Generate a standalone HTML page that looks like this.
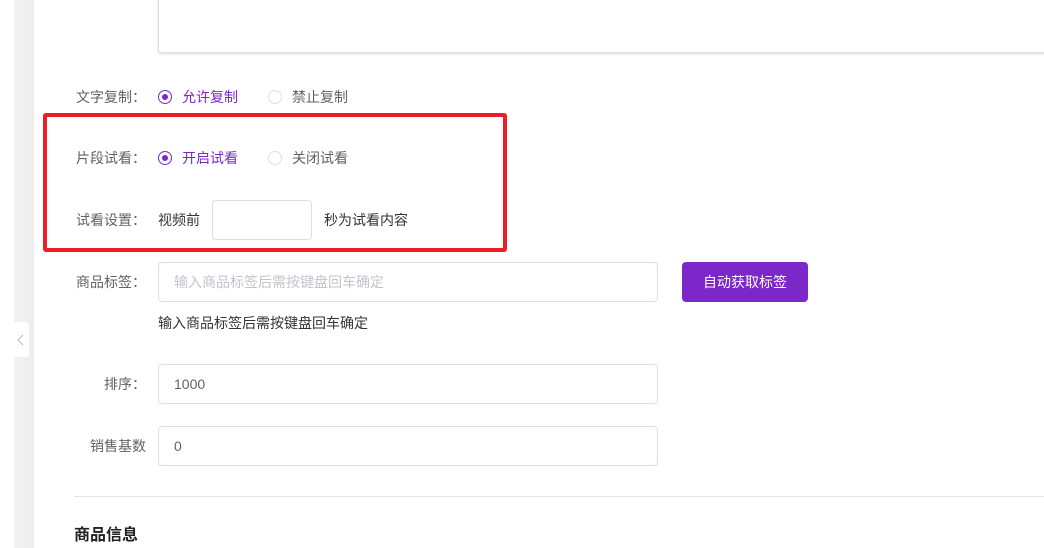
<!DOCTYPE html>
<html><head><meta charset="utf-8"><style>
*{box-sizing:border-box;margin:0;padding:0}
body{width:1044px;height:548px;overflow:hidden;background:#fff;font-family:"Liberation Sans","Noto Sans CJK SC",sans-serif;font-size:14px;color:#333;position:relative}
.strip{position:absolute;left:14px;top:0;width:20px;height:548px;background:linear-gradient(to right,#f2f2f2,#ececec)}
.tab{position:absolute;left:14px;top:322px;width:15px;height:35px;background:#fff;border-radius:0 3px 3px 0}
.tab svg{position:absolute;left:3px;top:12px}
.abs{position:absolute}
.ta{left:158px;top:-4px;width:900px;height:57px;border:1px solid #dcdfe6;border-radius:3px;box-shadow:0 1px 2px rgba(0,0,0,.15)}
.lbl{color:#606266;font-size:14px;line-height:16px}
.radio{width:14px;height:14px;border-radius:50%;border:1px solid #dcdfe6;background:#fff}
.radio.on{border-color:#7b27c9}
.radio.on::after{content:"";position:absolute;left:3px;top:3px;width:6px;height:6px;border-radius:50%;background:#7b27c9}
.inp{border:1px solid #dcdfe6;border-radius:4px;background:#fff;padding-left:15px;font-size:14px;color:#606266;display:flex;align-items:center}
.red{left:43px;top:113px;width:464px;height:139px;border:4px solid #ee1c25;border-radius:3px}
.btn{left:682px;top:262px;width:126px;height:40px;background:#7b27c9;border-radius:4px;color:#fff;font-size:14px;display:flex;align-items:center;justify-content:center}
</style></head><body>
<div class="strip"></div>
<div class="tab"><svg width="8" height="12" viewBox="0 0 8 12"><path d="M6 1L1 6l5 5" fill="none" stroke="#bbb" stroke-width="1"/></svg></div>
<div class="abs ta"></div>

<div class="abs lbl" style="left:76px;top:89px">文字复制：</div>
<div class="abs radio on" style="left:158px;top:90px"></div>
<div class="abs lbl" style="left:182px;top:89px;color:#7b27c9">允许复制</div>
<div class="abs radio" style="left:268px;top:90px"></div>
<div class="abs lbl" style="left:292px;top:89px">禁止复制</div>

<div class="abs red"></div>
<div class="abs lbl" style="left:76px;top:150px">片段试看：</div>
<div class="abs radio on" style="left:158px;top:151px"></div>
<div class="abs lbl" style="left:182px;top:150px;color:#7b27c9">开启试看</div>
<div class="abs radio" style="left:268px;top:151px"></div>
<div class="abs lbl" style="left:292px;top:150px">关闭试看</div>

<div class="abs lbl" style="left:76px;top:212px">试看设置：</div>
<div class="abs lbl" style="left:158px;top:212px;color:#333">视频前</div>
<div class="abs inp" style="left:212px;top:200px;width:100px;height:40px"></div>
<div class="abs lbl" style="left:324px;top:212px;color:#333">秒为试看内容</div>

<div class="abs lbl" style="left:76px;top:274px">商品标签：</div>
<div class="abs inp" style="left:158px;top:262px;width:500px;height:40px;color:#c0c4cc">输入商品标签后需按键盘回车确定</div>
<div class="abs btn">自动获取标签</div>
<div class="abs lbl" style="left:158px;top:315px;color:#333">输入商品标签后需按键盘回车确定</div>

<div class="abs lbl" style="left:104px;top:376px">排序：</div>
<div class="abs inp" style="left:158px;top:364px;width:500px;height:40px">1000</div>

<div class="abs lbl" style="left:90px;top:438px">销售基数</div>
<div class="abs inp" style="left:158px;top:426px;width:500px;height:40px">0</div>

<div class="abs" style="left:74px;top:496px;width:970px;height:1px;background:#e4e4e4"></div>
<div class="abs" style="left:74px;top:526px;font-size:16px;font-weight:bold;color:#222;line-height:20px">商品信息</div>
</body></html>
